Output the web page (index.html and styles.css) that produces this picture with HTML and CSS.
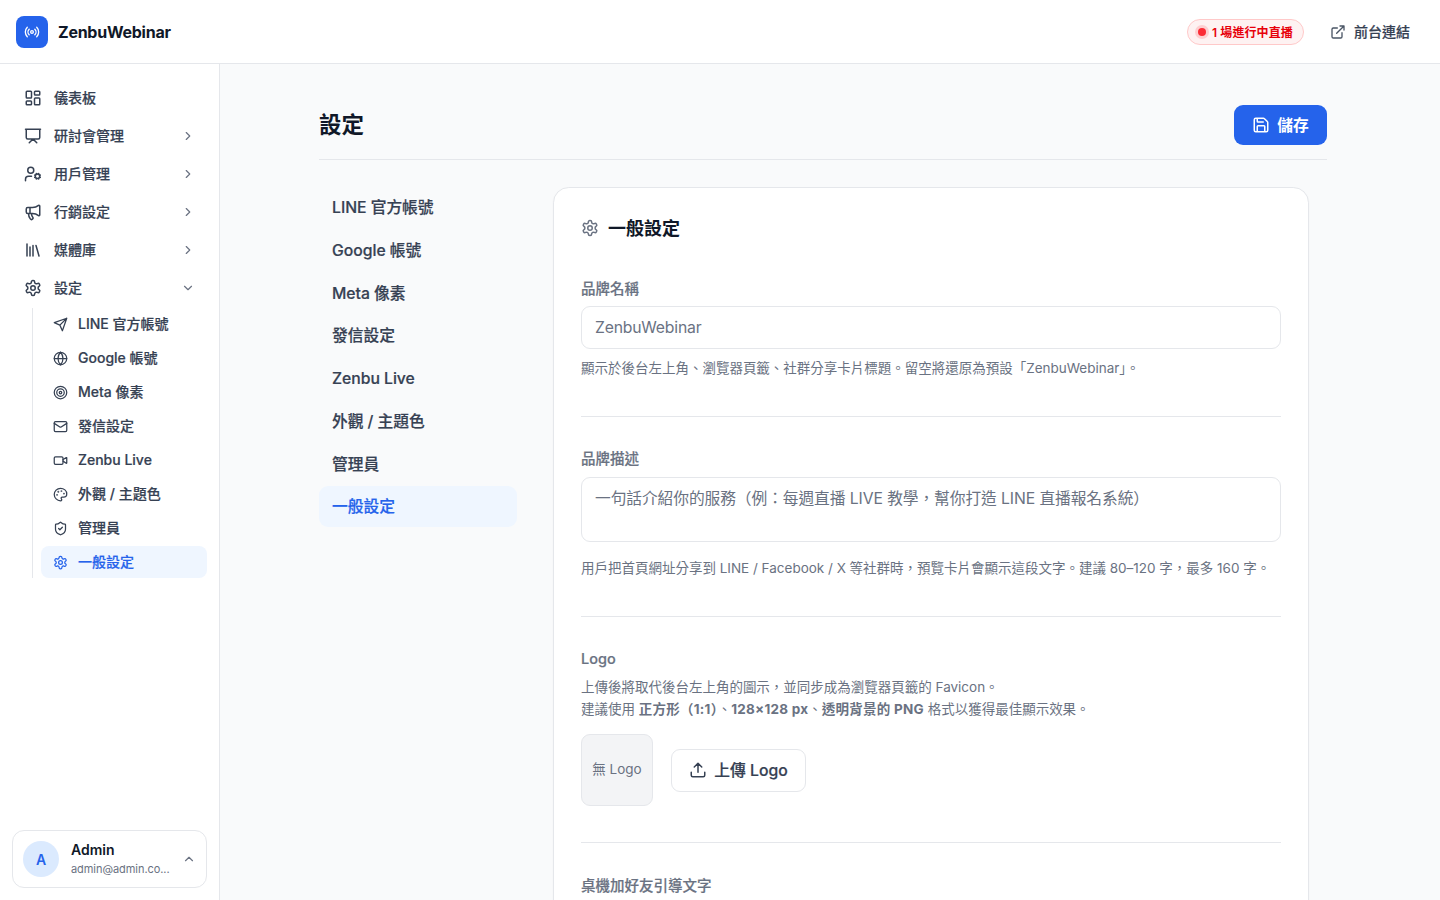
FILE: index.html
```html
<!DOCTYPE html>
<html lang="zh-Hant">
<head>
<meta charset="utf-8">
<title>ZenbuWebinar</title>
<link rel="stylesheet" href="styles.css">
</head>
<body>
<svg class="sprite" aria-hidden="true">
  <symbol id="radio" viewBox="0 0 24 24"><path d="M16.247 7.761a6 6 0 0 1 0 8.478M19.075 4.933a10 10 0 0 1 0 14.134M4.925 19.067a10 10 0 0 1 0-14.134M7.753 16.239a6 6 0 0 1 0-8.478"/><circle cx="12" cy="12" r="2"/></symbol>
  <symbol id="dashboard" viewBox="0 0 24 24"><rect width="7" height="9" x="3" y="3" rx="1"/><rect width="7" height="5" x="14" y="3" rx="1"/><rect width="7" height="9" x="14" y="12" rx="1"/><rect width="7" height="5" x="3" y="16" rx="1"/></symbol>
  <symbol id="presentation" viewBox="0 0 24 24"><path d="M2 3h20M21 3v11a2 2 0 0 1-2 2H5a2 2 0 0 1-2-2V3M7 21l5-5 5 5"/></symbol>
  <symbol id="user-cog" viewBox="0 0 24 24"><path d="M10 15H6a4 4 0 0 0-4 4v2M14.305 16.53l.923-.382M15.228 13.852l-.923-.383M16.852 12.228l-.383-.923M16.852 17.772l-.383.924M19.148 12.228l.383-.923M19.53 18.696l-.382-.924M20.772 13.852l.924-.383M20.772 16.148l.924.383"/><circle cx="18" cy="15" r="3"/><circle cx="9" cy="7" r="4"/></symbol>
  <symbol id="megaphone" viewBox="0 0 24 24"><path d="M11 6a13 13 0 0 0 8.4-2.8A1 1 0 0 1 21 4v12a1 1 0 0 1-1.6.8A13 13 0 0 0 11 14H5a2 2 0 0 1-2-2V8a2 2 0 0 1 2-2zM6 14a12 12 0 0 0 2.4 7.2 2 2 0 0 0 3.2-2.4A8 8 0 0 1 10 14M8 6v8"/></symbol>
  <symbol id="library" viewBox="0 0 24 24"><path d="m16 6 4 14M12 6v14M8 8v12M4 4v16"/></symbol>
  <symbol id="settings" viewBox="0 0 24 24"><path d="M12.22 2h-.44a2 2 0 0 0-2 2v.18a2 2 0 0 1-1 1.73l-.43.25a2 2 0 0 1-2 0l-.15-.08a2 2 0 0 0-2.73.73l-.22.38a2 2 0 0 0 .73 2.73l.15.1a2 2 0 0 1 1 1.72v.51a2 2 0 0 1-1 1.74l-.15.09a2 2 0 0 0-.73 2.73l.22.38a2 2 0 0 0 2.73.73l.15-.08a2 2 0 0 1 2 0l.43.25a2 2 0 0 1 1 1.73V20a2 2 0 0 0 2 2h.44a2 2 0 0 0 2-2v-.18a2 2 0 0 1 1-1.73l.43-.25a2 2 0 0 1 2 0l.15.08a2 2 0 0 0 2.73-.73l.22-.39a2 2 0 0 0-.73-2.73l-.15-.08a2 2 0 0 1-1-1.74v-.5a2 2 0 0 1 1-1.74l.15-.09a2 2 0 0 0 .73-2.73l-.22-.38a2 2 0 0 0-2.73-.73l-.15.08a2 2 0 0 1-2 0l-.43-.25a2 2 0 0 1-1-1.73V4a2 2 0 0 0-2-2z"/><circle cx="12" cy="12" r="3"/></symbol>
  <symbol id="send" viewBox="0 0 24 24"><path d="m22 2-7 20-4-9-9-4ZM22 2 11 13"/></symbol>
  <symbol id="globe" viewBox="0 0 24 24"><circle cx="12" cy="12" r="10"/><path d="M12 2a14.5 14.5 0 0 0 0 20 14.5 14.5 0 0 0 0-20M2 12h20"/></symbol>
  <symbol id="target" viewBox="0 0 24 24"><circle cx="12" cy="12" r="10"/><circle cx="12" cy="12" r="6"/><circle cx="12" cy="12" r="2"/></symbol>
  <symbol id="mail" viewBox="0 0 24 24"><rect width="20" height="16" x="2" y="4" rx="2"/><path d="m22 7-8.97 5.7a1.94 1.94 0 0 1-2.06 0L2 7"/></symbol>
  <symbol id="video" viewBox="0 0 24 24"><path d="m16 13 5.223 3.482a.5.5 0 0 0 .777-.416V7.87a.5.5 0 0 0-.752-.432L16 10.5"/><rect x="2" y="6" width="14" height="12" rx="2"/></symbol>
  <symbol id="palette" viewBox="0 0 24 24"><path d="M12 22a1 1 0 0 1 0-20 10 9 0 0 1 10 9 5 5 0 0 1-5 5h-2.25a1.75 1.75 0 0 0-1.4 2.8l.3.4a1.75 1.75 0 0 1-1.4 2.8z"/><g fill="currentColor"><circle cx="13.5" cy="6.5" r=".5"/><circle cx="17.5" cy="10.5" r=".5"/><circle cx="6.5" cy="12.5" r=".5"/><circle cx="8.5" cy="7.5" r=".5"/></g></symbol>
  <symbol id="shield" viewBox="0 0 24 24"><path d="M20 13c0 5-3.5 7.5-7.66 8.95a1 1 0 0 1-.67-.01C7.5 20.5 4 18 4 13V6a1 1 0 0 1 1-1c2 0 4.500-1.200 6.240-2.720a1.170 1.170 0 0 1 1.520 0C14.510 3.810 17 5 19 5a1 1 0 0 1 1 1zM9 12l2 2 4-4"/></symbol>
  <symbol id="chev-right" viewBox="0 0 24 24"><path d="m9 18 6-6-6-6"/></symbol>
  <symbol id="chev-down" viewBox="0 0 24 24"><path d="m6 9 6 6 6-6"/></symbol>
  <symbol id="chev-up" viewBox="0 0 24 24"><path d="m18 15-6-6-6 6"/></symbol>
  <symbol id="external" viewBox="0 0 24 24"><path d="M15 3h6v6M10 14 21 3M18 13v6a2 2 0 0 1-2 2H5a2 2 0 0 1-2-2V8a2 2 0 0 1 2-2h6"/></symbol>
  <symbol id="save" viewBox="0 0 24 24"><path d="M15.200 3a2 2 0 0 1 1.400.6l3.800 3.800a2 2 0 0 1 .6 1.400V19a2 2 0 0 1-2 2H5a2 2 0 0 1-2-2V5a2 2 0 0 1 2-2zM17 21v-7a1 1 0 0 0-1-1H8a1 1 0 0 0-1 1v7M7 3v4a1 1 0 0 0 1 1h7"/></symbol>
  <symbol id="upload" viewBox="0 0 24 24"><path d="M21 15v4a2 2 0 0 1-2 2H5a2 2 0 0 1-2-2v-4M17 8l-5-5-5 5M12 3v12"/></symbol>
</svg>

<header class="topbar">
  <div class="brand">
    <span class="brand-mark"><svg class="icon icon-16"><use href="#radio"/></svg></span>
    <span class="brand-name">ZenbuWebinar</span>
  </div>
  <div class="topbar-right">
    <span class="live-pill"><i class="live-dot"></i>1 場進行中直播</span>
    <a class="front-link"><svg class="icon icon-16"><use href="#external"/></svg>前台連結</a>
  </div>
</header>

<div class="shell">
  <aside class="sidebar">
    <nav class="menu">
      <a class="menu-item"><svg class="icon icon-18"><use href="#dashboard"/></svg><span>儀表板</span></a>
      <a class="menu-item"><svg class="icon icon-18"><use href="#presentation"/></svg><span>研討會管理</span><svg class="icon chevron"><use href="#chev-right"/></svg></a>
      <a class="menu-item"><svg class="icon icon-18"><use href="#user-cog"/></svg><span>用戶管理</span><svg class="icon chevron"><use href="#chev-right"/></svg></a>
      <a class="menu-item"><svg class="icon icon-18"><use href="#megaphone"/></svg><span>行銷設定</span><svg class="icon chevron"><use href="#chev-right"/></svg></a>
      <a class="menu-item"><svg class="icon icon-18"><use href="#library"/></svg><span>媒體庫</span><svg class="icon chevron"><use href="#chev-right"/></svg></a>
      <a class="menu-item"><svg class="icon icon-18"><use href="#settings"/></svg><span>設定</span><svg class="icon chevron"><use href="#chev-down"/></svg></a>
      <div class="submenu">
        <a class="sub-item"><svg class="icon icon-15"><use href="#send"/></svg>LINE 官方帳號</a>
        <a class="sub-item"><svg class="icon icon-15"><use href="#globe"/></svg>Google 帳號</a>
        <a class="sub-item"><svg class="icon icon-15"><use href="#target"/></svg>Meta 像素</a>
        <a class="sub-item"><svg class="icon icon-15"><use href="#mail"/></svg>發信設定</a>
        <a class="sub-item"><svg class="icon icon-15"><use href="#video"/></svg>Zenbu Live</a>
        <a class="sub-item"><svg class="icon icon-15"><use href="#palette"/></svg>外觀 / 主題色</a>
        <a class="sub-item"><svg class="icon icon-15"><use href="#shield"/></svg>管理員</a>
        <a class="sub-item active"><svg class="icon icon-15"><use href="#settings"/></svg>一般設定</a>
      </div>
    </nav>
    <div class="user-card">
      <span class="avatar">A</span>
      <div class="user-text">
        <div class="user-name">Admin</div>
        <div class="user-mail">admin@admin.co...</div>
      </div>
      <svg class="icon chevron"><use href="#chev-up"/></svg>
    </div>
  </aside>

  <main class="main">
    <div class="page">
      <div class="page-head">
        <h1 class="page-title">設定</h1>
        <button class="save-btn"><svg class="icon icon-18"><use href="#save"/></svg>儲存</button>
      </div>
      <div class="columns">
        <nav class="tabs">
          <a class="tab">LINE 官方帳號</a>
          <a class="tab">Google 帳號</a>
          <a class="tab">Meta 像素</a>
          <a class="tab">發信設定</a>
          <a class="tab">Zenbu Live</a>
          <a class="tab">外觀 / 主題色</a>
          <a class="tab">管理員</a>
          <a class="tab active">一般設定</a>
        </nav>
        <section class="card">
          <h2 class="card-title"><svg class="icon icon-18"><use href="#settings"/></svg>一般設定</h2>
          <div class="field">
            <label class="label label-low">品牌名稱</label>
            <input class="input" placeholder="ZenbuWebinar">
            <p class="help">顯示於後台左上角、瀏覽器頁籤、社群分享卡片標題。留空將還原為預設「ZenbuWebinar」。</p>
          </div>
          <div class="field">
            <label class="label">品牌描述</label>
            <textarea class="input textarea" placeholder="一句話介紹你的服務（例：每週直播 LIVE 教學，幫你打造 LINE 直播報名系統）"></textarea>
            <p class="help help-area">用戶把首頁網址分享到 LINE / Facebook / X 等社群時，預覽卡片會顯示這段文字。建議 80–120 字，最多 160 字。</p>
          </div>
          <div class="field field-logo">
            <label class="label">Logo</label>
            <p class="help help-logo">上傳後將取代後台左上角的圖示，並同步成為瀏覽器頁籤的 Favicon。<br>建議使用 <b>正方形（1:1）</b>、<b>128×128 px</b>、<b>透明背景的 PNG</b> 格式以獲得最佳顯示效果。</p>
            <div class="logo-row">
              <div class="logo-box">無 Logo</div>
              <button class="upload-btn"><svg class="icon icon-18"><use href="#upload"/></svg>上傳 Logo</button>
            </div>
          </div>
          <div class="field">
            <label class="label label-low">桌機加好友引導文字</label>
            <input class="input">
          </div>
        </section>
      </div>
    </div>
  </main>
</div>
</body>
</html>
```

FILE: styles.css
```css
* { box-sizing: border-box; }
body {
  margin: 0;
  height: 900px;
  overflow: hidden;
  font-family: Inter, "Noto Sans CJK TC", sans-serif;
  font-size: 14px;
  color: #364153;
  background: #f9fafb;
}
h1, h2, p { margin: 0; }
button, input, textarea { font: inherit; }
.sprite { display: none; }
.icon {
  flex: none;
  fill: none;
  stroke: currentColor;
  stroke-width: 2;
  stroke-linecap: round;
  stroke-linejoin: round;
}
.icon-15 { width: 15px; height: 15px; }
.icon-16 { width: 16px; height: 16px; }
.icon-18 { width: 18px; height: 18px; }
.chevron { width: 14px; height: 14px; margin-left: auto; color: #6a7282; }

/* Medium-weight labels: slightly thickened CJK strokes */
.menu-item, .sub-item, .tab, .label, .front-link, .upload-btn { -webkit-text-stroke: .2px currentColor; }

/* Icon + label rows: labels sit one pixel above the icon centre line */
.menu-item, .sub-item, .front-link, .save-btn, .upload-btn { padding-bottom: 2px; }
.menu-item .icon, .sub-item .icon, .front-link .icon, .save-btn .icon, .upload-btn .icon { margin-top: 2px; }

.topbar {
  height: 64px;
  display: flex;
  align-items: center;
  justify-content: space-between;
  padding: 0 30px 0 16px;
  background: #fff;
  border-bottom: 1px solid #e5e7eb;
}
.brand { display: flex; align-items: center; gap: 10px; }
.brand-mark {
  width: 32px; height: 32px;
  display: flex; align-items: center; justify-content: center;
  border-radius: 8px;
  background: #2563eb;
  color: #fff;
}
.brand-name { font-size: 16px; font-weight: 700; letter-spacing: -.25px; color: #101828; }
.topbar-right { display: flex; align-items: center; gap: 26px; }
.live-pill {
  width: 117px; height: 26px;
  display: flex; align-items: center; gap: 6px;
  padding: 0 0 1px 10px;
  border: 1px solid #ffc9c9;
  border-radius: 13px;
  background: #fef2f2;
  color: #e7000b;
  font-size: 12px; font-weight: 600;
  letter-spacing: .1px;
  white-space: nowrap;
}
.live-dot {
  width: 8px; height: 8px; flex: none;
  margin-top: 1px;
  border-radius: 50%;
  background: #fb2c36;
  box-shadow: 0 0 0 3px #fdcfd1;
}
.front-link { display: flex; align-items: center; gap: 8px; font-weight: 500; }
.front-link .icon { color: #4a5565; }

.shell { display: flex; height: 836px; }
.sidebar {
  width: 220px; flex: none;
  display: flex; flex-direction: column; justify-content: space-between;
  padding: 16px 12px 12px;
  background: #fff;
  border-right: 1px solid #e5e7eb;
}
.menu { display: flex; flex-direction: column; gap: 2px; }
.menu-item {
  height: 36px;
  display: flex; align-items: center; gap: 12px;
  padding-left: 12px; padding-right: 12px;
  font-weight: 500;
}
.submenu {
  display: flex; flex-direction: column; gap: 2px;
  margin-left: 20px; padding-left: 8px;
  border-left: 1px solid #e5e7eb;
}
.sub-item {
  height: 32px;
  display: flex; align-items: center; gap: 10px;
  padding-left: 12px; padding-right: 12px;
  border-radius: 8px;
  font-weight: 450;
}
.active { color: #2563eb; background: #eff6ff; }
.user-card {
  height: 58px;
  display: flex; align-items: center; gap: 12px;
  padding: 0 10px;
  border: 1px solid #e5e7eb;
  border-radius: 12px;
}
.user-card .chevron { margin-right: 1px; }
.avatar {
  width: 36px; height: 36px; flex: none;
  display: flex; align-items: center; justify-content: center;
  border-radius: 50%;
  background: #dbeafe;
  color: #2563eb;
  font-weight: 600;
}
.user-name { padding-bottom: 2px; line-height: 18px; font-weight: 600; color: #101828; }
.user-mail { line-height: 17px; font-size: 11px; letter-spacing: -.06px; color: #6a7282; }

.main { flex: 1; padding: 41px 113px 0 99px; overflow: hidden; }
.page-head {
  height: 55px;
  display: flex; align-items: flex-start; justify-content: space-between;
  border-bottom: 1px solid #e5e7eb;
}
.page-title { font-size: 22.5px; line-height: 40px; font-weight: 600; color: #101828; }
.save-btn {
  width: 93px; height: 40px;
  display: flex; align-items: center; justify-content: center; gap: 7px;
  padding-top: 0; padding-left: 0; padding-right: 0;
  border: 0;
  border-radius: 9px;
  background: #2563eb;
  color: #fff;
  font-size: 15.75px; font-weight: 600;
}
.columns { display: flex; gap: 36px; padding: 27px 18px 0 0; }
.tabs { width: 198px; flex: none; display: flex; flex-direction: column; gap: 2.25px; }
.tab {
  height: 40.5px;
  padding: 0 13px;
  border-radius: 9px;
  font-size: 15.75px; line-height: 41px; font-weight: 450;
  letter-spacing: -.03px;
}
.card {
  flex: 1;
  padding: 27px;
  border: 1px solid #e5e7eb;
  border-radius: 15.75px;
  background: #fff;
  box-shadow: 0 1px 2px rgba(0, 0, 0, .04);
}
.card-title {
  height: 27px;
  display: flex; align-items: center; gap: 9px;
  margin-bottom: 35px;
  padding-bottom: 3px;
  font-size: 18px; font-weight: 600;
  color: #101828;
}
.card-title .icon { margin-top: 1px; color: #6a7282; }
.field { display: flex; flex-direction: column; padding-bottom: 37px; color: #6a7282; }
.field + .field { border-top: 1px solid #e5e7eb; padding-top: 31px; }
.field.field-logo { padding-bottom: 36px; }
.label { height: 22px; margin-bottom: 7px; font-size: 14.5px; line-height: 22px; font-weight: 450; }
.label-low { line-height: 23px; }
.input {
  width: 100%; height: 43px;
  padding: 0 13px;
  border: 1px solid #e5e7eb;
  border-radius: 9px;
  background: #fff;
  font-size: 15.75px;
  letter-spacing: -.2px;
}
.input::placeholder { color: #6a7282; opacity: 1; }
.textarea { height: 65px; padding: 9px 13px; line-height: 24px; letter-spacing: -.1px; resize: none; }
.help { margin-top: 8px; font-size: 13.5px; line-height: 22px; letter-spacing: -.01px; white-space: nowrap; }
.help-area { margin-top: 15px; }
.help-logo { margin-top: -1px; }
.help b { font-weight: 700; letter-spacing: .25px; }
.logo-row { display: flex; align-items: center; gap: 18px; margin-top: 14px; }
.logo-box {
  width: 72px; height: 72px;
  display: flex; align-items: center; justify-content: center;
  padding-bottom: 4px;
  border: 1px solid #e5e7eb;
  border-radius: 9px;
  background: #f3f4f6;
  font-size: 13.5px;
}
.upload-btn {
  width: 135px; height: 43px;
  display: flex; align-items: center; justify-content: center; gap: 7px;
  padding-top: 0; padding-left: 0; padding-right: 0;
  border: 1px solid #e5e7eb;
  border-radius: 9px;
  background: #fff;
  color: #364153;
  font-size: 15.75px; font-weight: 450;
}
```
